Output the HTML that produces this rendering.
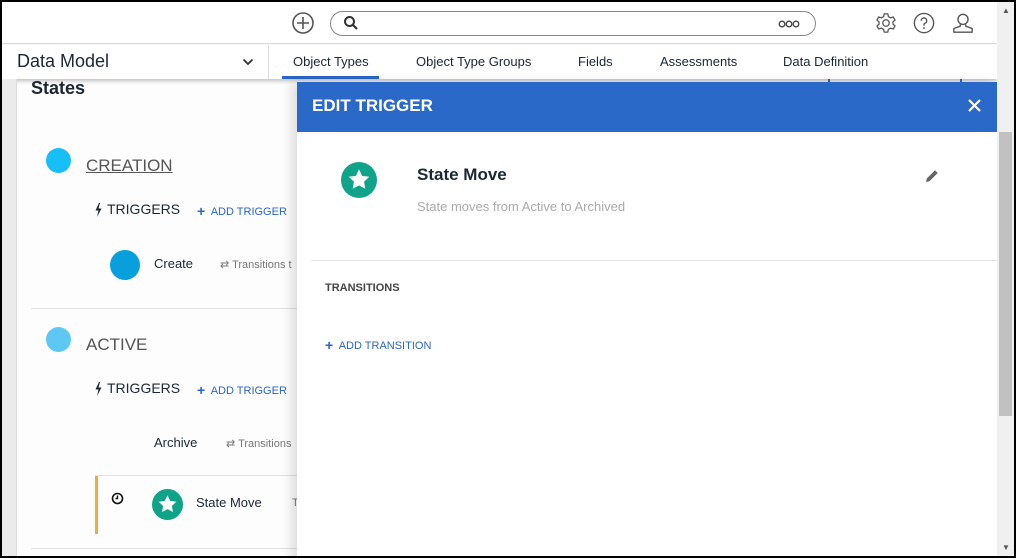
<!DOCTYPE html>
<html><head><meta charset="utf-8"><style>
*{box-sizing:border-box;margin:0;padding:0}
body{width:1016px;height:558px;background:#000;font-family:"Liberation Sans",sans-serif;position:relative;overflow:hidden}
.frame{position:absolute;left:2px;top:2px;width:1012px;height:554px;background:#fdfdfd;overflow:hidden}
.a{position:absolute}
.top{left:0;top:0;width:995px;height:42px;background:#fff;border-bottom:1px solid #ddd}
.nav{left:0;top:43px;width:995px;height:34px;background:#fff;box-shadow:0 2px 4px rgba(0,0,0,.25)}
.left{left:0;top:77px;width:15px;height:480px;background:#ebebeb;border-right:1px solid #ddd}
.t{position:absolute;white-space:nowrap}
.blue{color:#2a66c7}
.pl{font-size:14px;font-weight:bold;position:relative;top:1px}
.panel{left:295px;top:80px;width:700px;height:480px;background:#fff;box-shadow:-6px 0 10px rgba(0,0,0,.12)}
.sb{left:995px;top:0;width:17px;height:554px;background:#f0f0f0}
</style></head><body><div class="frame">
<div class="a top"></div>
<svg class="a" style="left:289px;top:9px" width="24" height="24" viewBox="0 0 24 24"><circle cx="12" cy="12" r="10" fill="none" stroke="#555" stroke-width="1.6"/><path d="M12 6v12M6 12h12" stroke="#555" stroke-width="1.6"/></svg>
<div class="a" style="left:328px;top:9px;width:486px;height:25px;border:1.3px solid #888;border-radius:13px"></div>
<svg class="a" style="left:341px;top:13px" width="16" height="16" viewBox="0 0 16 16"><circle cx="6.5" cy="6.5" r="4.5" fill="none" stroke="#333" stroke-width="2"/><path d="M10 10l4 4" stroke="#333" stroke-width="2.2"/></svg>
<svg class="a" style="left:776px;top:18px" width="22" height="8" viewBox="0 0 22 8"><circle cx="4" cy="4" r="2.8" fill="none" stroke="#444" stroke-width="1.3"/><circle cx="11" cy="4" r="2.8" fill="none" stroke="#444" stroke-width="1.3"/><circle cx="18" cy="4" r="2.8" fill="none" stroke="#444" stroke-width="1.3"/></svg>
<svg class="a" style="left:873px;top:10px" width="22" height="22" viewBox="0 0 24 24"><path d="M10 2h4l.6 3 2.4 1.4 2.9-1 2 3.4-2.3 2v2.4l2.3 2-2 3.4-2.9-1L14.6 19 14 22h-4l-.6-3L7 17.6l-2.9 1-2-3.4 2.3-2v-2.4l-2.3-2 2-3.4 2.9 1L9.4 5z" fill="none" stroke="#555" stroke-width="1.4" stroke-linejoin="round"/><circle cx="12" cy="12" r="3.5" fill="none" stroke="#555" stroke-width="1.4"/></svg>
<svg class="a" style="left:911px;top:10px" width="22" height="22" viewBox="0 0 24 24"><circle cx="12" cy="12" r="10.5" fill="none" stroke="#555" stroke-width="1.5"/><path d="M9 9.5a3 3 0 1 1 4 2.8c-.8.4-1 1-1 2v.5" fill="none" stroke="#555" stroke-width="1.5"/><circle cx="12" cy="17.5" r="1" fill="#555"/></svg>
<svg class="a" style="left:950px;top:10px" width="22" height="22" viewBox="0 0 24 24"><circle cx="12" cy="8" r="5.5" fill="none" stroke="#555" stroke-width="1.5"/><path d="M9 13.5v2L2 18v4h20v-4l-7-2.5v-2" fill="none" stroke="#555" stroke-width="1.5" stroke-linejoin="round"/></svg>
<div class="a nav"></div>
<div class="a" style="left:266px;top:43px;width:1px;height:34px;background:#ddd"></div>
<div class="t" style="left:15px;top:49px;font-size:18px;color:#1b2733">Data Model</div>
<svg class="a" style="left:240px;top:56px" width="12" height="8" viewBox="0 0 12 8"><path d="M1.5 1.5L6 6l4.5-4.5" fill="none" stroke="#333" stroke-width="1.8"/></svg>
<div class="t" style="left:291px;top:52px;font-size:13px;color:#1b2733">Object Types</div>
<div class="a" style="left:280px;top:74px;width:97px;height:3px;background:#2a66c7"></div>
<div class="t" style="left:414px;top:52px;font-size:13px;color:#1b2733">Object Type Groups</div>
<div class="t" style="left:576px;top:52px;font-size:13px;color:#1b2733">Fields</div>
<div class="t" style="left:658px;top:52px;font-size:13px;color:#1b2733">Assessments</div>
<div class="t" style="left:781px;top:52px;font-size:13px;color:#1b2733">Data Definition</div>
<div class="a left"></div>
<div class="t" style="left:29px;top:76px;font-size:18px;font-weight:bold;color:#1b2733">States</div>
<div class="a" style="left:44px;top:146px;width:25px;height:25px;border-radius:50%;background:#17bff7"></div>
<div class="t" style="left:84px;top:154px;font-size:17px;color:#555;text-decoration:underline">CREATION</div>
<svg class="a" style="left:93px;top:201px" width="7" height="14" viewBox="0 0 7 14"><path d="M4 0L0.5 7.5H3.5L2 14L6.5 5.5H3.5L5 0z" fill="#1b2733"/></svg>
<div class="t" style="left:105px;top:199px;font-size:14px;color:#1b2733">TRIGGERS</div>
<div class="t blue" style="left:195px;top:200px;font-size:11px"><span class="pl">+</span>&nbsp; ADD TRIGGER</div>
<div class="a" style="left:108px;top:248px;width:30px;height:30px;border-radius:50%;background:#079fdc"></div>
<div class="t" style="left:152px;top:254px;font-size:13px;color:#1b2733">Create</div>
<div class="t" style="left:218px;top:256px;font-size:11px;color:#777">⇄ Transitions t</div>
<div class="a" style="left:29px;top:306px;width:270px;height:1px;background:#e2e2e2"></div>
<div class="a" style="left:44px;top:325px;width:25px;height:25px;border-radius:50%;background:#5ec8f5"></div>
<div class="t" style="left:84px;top:333px;font-size:17px;color:#555">ACTIVE</div>
<svg class="a" style="left:93px;top:380px" width="7" height="14" viewBox="0 0 7 14"><path d="M4 0L0.5 7.5H3.5L2 14L6.5 5.5H3.5L5 0z" fill="#1b2733"/></svg>
<div class="t" style="left:105px;top:378px;font-size:14px;color:#1b2733">TRIGGERS</div>
<div class="t blue" style="left:195px;top:379px;font-size:11px"><span class="pl">+</span>&nbsp; ADD TRIGGER</div>
<div class="t" style="left:152px;top:433px;font-size:13px;color:#1b2733">Archive</div>
<div class="t" style="left:224px;top:435px;font-size:11px;color:#777">⇄ Transitions</div>
<div class="a" style="left:93px;top:473px;width:210px;height:1px;background:#e2e2e2"></div>
<div class="a" style="left:93px;top:474px;width:3px;height:58px;background:#f5a93b"></div>
<svg class="a" style="left:109px;top:490px" width="13" height="13" viewBox="0 0 13 13"><circle cx="6.5" cy="6.5" r="5" fill="none" stroke="#111" stroke-width="1.6"/><path d="M6.5 3.5v3h-2" fill="none" stroke="#111" stroke-width="1.4"/></svg>
<svg class="a" style="left:150px;top:487px" width="31" height="31" viewBox="0 0 32 32"><circle cx="16" cy="16" r="16" fill="#0fa38a"/><path d="M16 6.5l2.8 5.8 6.3.8-4.6 4.4 1.1 6.3L16 20.8l-5.6 3 1.1-6.3-4.6-4.4 6.3-.8z" fill="#fff"/></svg>
<div class="t" style="left:194px;top:493px;font-size:13px;color:#1b2733">State Move</div>
<div class="t" style="left:290px;top:495px;font-size:11px;color:#777">T</div>
<div class="a" style="left:29px;top:546px;width:270px;height:1px;background:#e2e2e2"></div>
<div class="a" style="left:826px;top:77px;width:2px;height:6px;background:#2a66c7"></div>
<div class="a" style="left:958px;top:77px;width:2px;height:6px;background:#2a66c7"></div>
<div class="a panel">
  <div class="a" style="left:0;top:0;width:700px;height:50px;background:#2a69c8"></div>
  <div class="t" style="left:15px;top:14px;font-size:17px;font-weight:bold;color:#fff">EDIT TRIGGER</div>
  <svg class="a" style="left:670px;top:16px" width="15" height="15" viewBox="0 0 15 15"><path d="M2 2l11 11M13 2L2 13" stroke="#fff" stroke-width="2.2"/></svg>
  <svg class="a" style="left:44px;top:80px" width="36" height="36" viewBox="0 0 32 32"><circle cx="16" cy="16" r="16" fill="#0fa38a"/><path d="M16 6.5l2.8 5.8 6.3.8-4.6 4.4 1.1 6.3L16 20.8l-5.6 3 1.1-6.3-4.6-4.4 6.3-.8z" fill="#fff"/></svg>
  <div class="t" style="left:120px;top:83px;font-size:17px;font-weight:bold;color:#1b2733">State Move</div>
  <div class="t" style="left:120px;top:117px;font-size:13px;color:#aaa">State moves from Active to Archived</div>
  <svg class="a" style="left:627px;top:86px" width="16" height="16" viewBox="0 0 16 16"><path d="M2 14l.8-3.5L11 2.3l2.7 2.7-8.2 8.2z" fill="#666"/></svg>
  <div class="a" style="left:14px;top:178px;width:686px;height:1px;background:#e2e2e2"></div>
  <div class="t" style="left:28px;top:200px;font-size:11px;font-weight:bold;color:#444">TRANSITIONS</div>
  <div class="t blue" style="left:28px;top:254px;font-size:11px"><span class="pl">+</span>&nbsp; ADD TRANSITION</div>
</div>
<div class="a sb"></div>
<div class="a" style="left:997px;top:130px;width:13px;height:284px;background:#c1c1c1"></div>
<div class="t" style="left:1000px;top:4px;font-size:8px;color:#555">▲</div>
<div class="t" style="left:1000px;top:541px;font-size:8px;color:#555">▼</div>
</div></body></html>
